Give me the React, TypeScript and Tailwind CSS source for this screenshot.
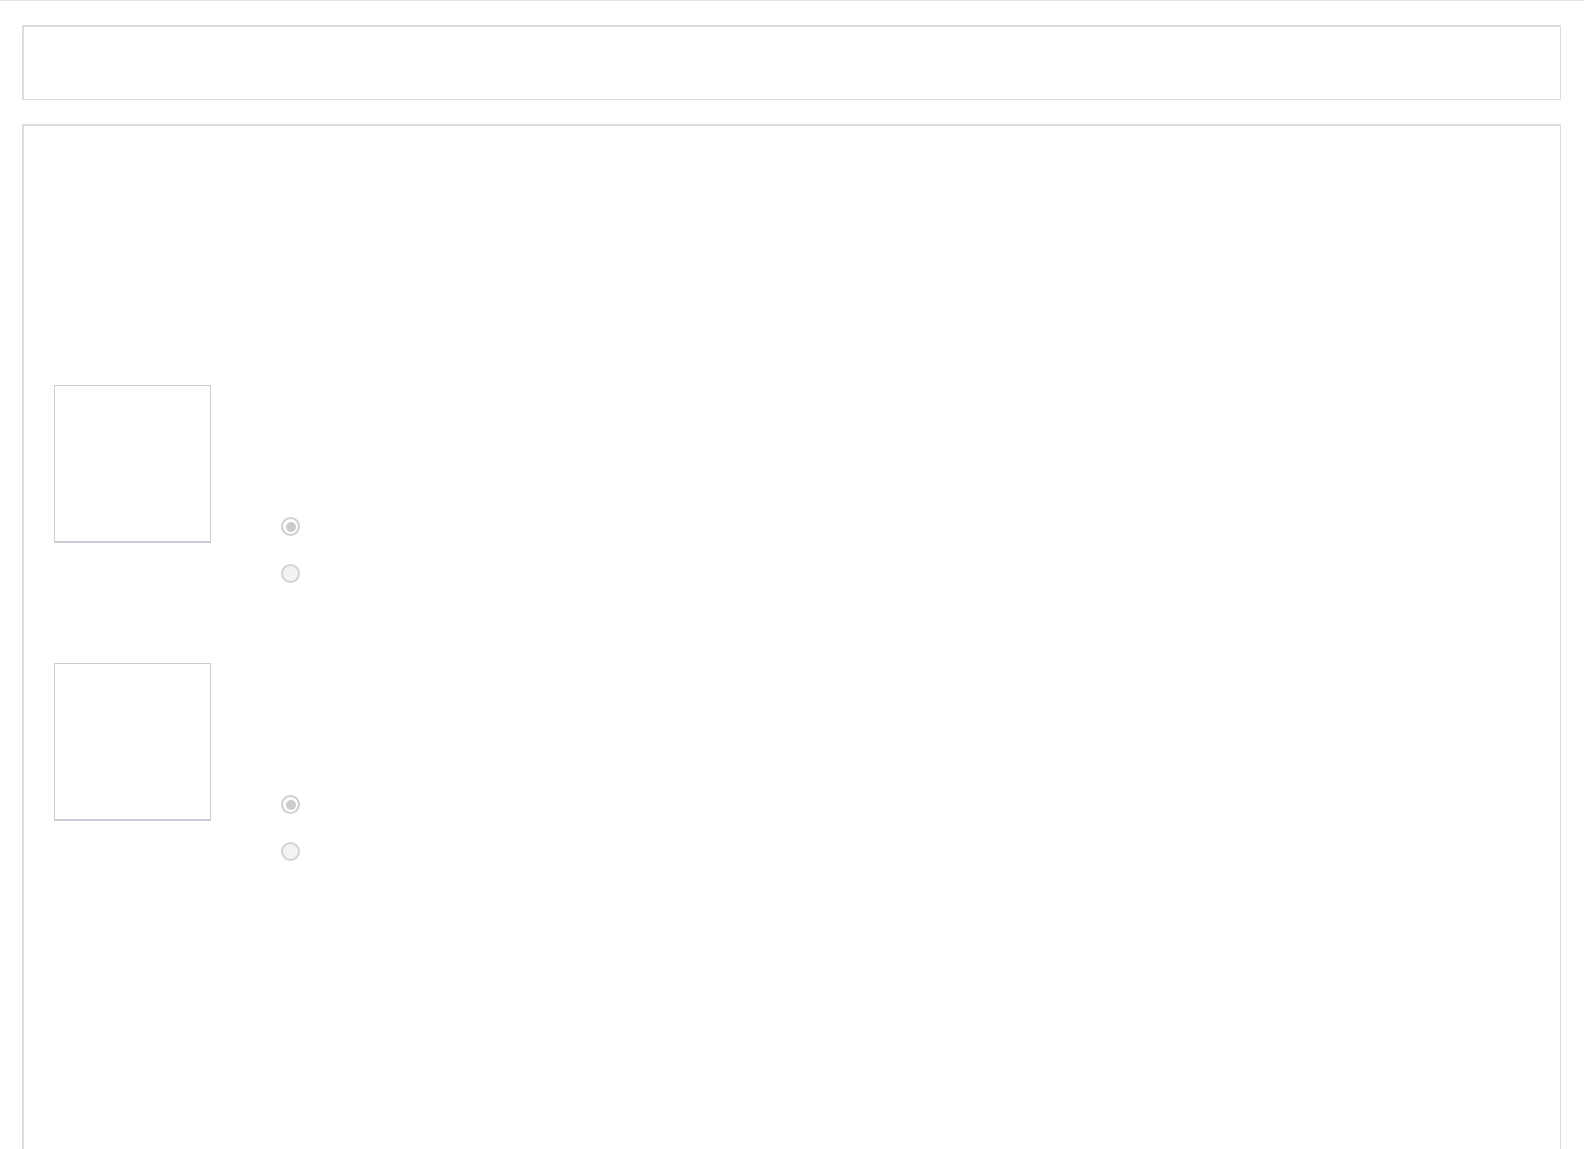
import React from 'react';

const Radio: React.FC<{ checked?: boolean }> = ({ checked }) => (
  <span
    className={
      checked
        ? 'flex h-[19px] w-[19px] items-center justify-center rounded-full border-2 border-[#d0d0d0] bg-white'
        : 'flex h-[19px] w-[19px] items-center justify-center rounded-full border-2 border-[#d3d3d3] bg-[#f3f3f3]'
    }
  >
    {checked && <span className="h-[10px] w-[10px] rounded-full bg-[#cbcbcb]" />}
  </span>
);

const QuestionRow: React.FC = () => (
  <div className="flex items-start">
    <div className="h-[158px] w-[157px] shrink-0 border border-b-2 border-[#c9cdd6] bg-white" />
    <div className="ml-[70px] flex flex-col gap-[28px] pt-[132px]">
      <Radio checked />
      <Radio />
    </div>
  </div>
);

export default function App() {
  return (
    <div className="min-h-screen border-t border-[#e3e3e3] bg-white font-['Liberation_Sans',Arial,sans-serif]">
      <div className="pl-[22px] pr-[23px] pt-[24px]">
        <div className="h-[75px] border-t-2 border-l-2 border-r border-b border-[#dcdcdc]" />
        <div className="mt-[24px] h-[1100px] border-t-2 border-l-2 border-r border-b border-[#dcdcdc] pl-[30px] pr-[29px] pt-[259px]">
          <div className="flex flex-col gap-[80px]">
            <QuestionRow />
            <QuestionRow />
          </div>
        </div>
      </div>
    </div>
  );
}
